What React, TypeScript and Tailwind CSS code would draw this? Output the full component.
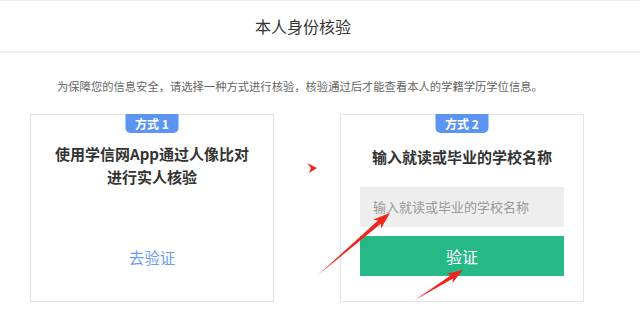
import React from "react";

function arrowPoints(tx: number, ty: number, hx: number, hy: number, headLen: number, headHalf: number, shaftHalf: number) {
  const dx = hx - tx;
  const dy = hy - ty;
  const len = Math.sqrt(dx * dx + dy * dy);
  const ux = dx / len;
  const uy = dy / len;
  const nx = -uy;
  const ny = ux;
  const bx = hx - ux * headLen;
  const by = hy - uy * headLen;
  const bbx = hx - ux * (headLen + 3);
  const bby = hy - uy * (headLen + 3);
  const pts = [
    [tx, ty],
    [bx + nx * shaftHalf, by + ny * shaftHalf],
    [bbx + nx * headHalf, bby + ny * headHalf],
    [hx, hy],
    [bbx - nx * headHalf, bby - ny * headHalf],
    [bx - nx * shaftHalf, by - ny * shaftHalf],
  ];
  return pts.map((p) => `${p[0].toFixed(1)},${p[1].toFixed(1)}`).join(" ");
}

export default function App() {
  const font = { fontFamily: '"Noto Sans CJK SC", "Noto Sans", sans-serif' };
  return (
    <div className="relative w-[640px] h-[331px] bg-white overflow-hidden" style={font}>
      <div className="border-t border-[#eeeeee] border-b-2 border-b-[#efefef] h-[53px] flex items-center justify-center pr-[34px]">
        <span className="text-[16px] text-[#333333] leading-none">本人身份核验</span>
      </div>
      <div className="mt-[23px] pl-[57px] text-[11.3px] leading-[20px] text-[#666666]">
        为保障您的信息安全，请选择一种方式进行核验，核验通过后才能查看本人的学籍学历学位信息。
      </div>
      <div className="mt-[18px] pl-[30px] flex gap-[66px]">
        <div className="relative w-[244px] h-[188px] border border-[#e4e4e4] flex flex-col items-center pt-[27px]">
          <div className="absolute -top-px left-1/2 -translate-x-1/2 w-[53px] h-[19px] rounded-b-[5px] bg-[#5b94f1] text-white text-[12px] font-bold flex items-center justify-center">
            方式 1
          </div>
          <div className="text-[15px] font-bold leading-[23px] text-[#333333] text-center">
            使用学信网App通过人像比对
            <br />
            进行实人核验
          </div>
          <div className="mt-[57px] text-[15.5px] leading-[24px] text-[#6c9df2]">去验证</div>
        </div>
        <div className="relative w-[244px] h-[188px] border border-[#e4e4e4] flex flex-col items-center pt-[30px]">
          <div className="absolute -top-px left-1/2 -translate-x-1/2 w-[53px] h-[19px] rounded-b-[5px] bg-[#5b94f1] text-white text-[12px] font-bold flex items-center justify-center">
            方式 2
          </div>
          <div className="text-[15px] font-bold leading-[23px] text-[#333333] text-center">输入就读或毕业的学校名称</div>
          <div className="mt-[19px] w-[204px] h-[40px] bg-[#eeeeee] flex items-center pl-[13px] text-[13px] text-[#999999]">
            输入就读或毕业的学校名称
          </div>
          <div className="mt-[9px] w-[204px] h-[40px] bg-[#26b887] flex items-center justify-center text-[16px] text-white">
            验证
          </div>
        </div>
      </div>
      <svg className="absolute left-0 top-0 pointer-events-none" width="640" height="331" viewBox="0 0 640 331">
        <polygon points="307,163 317,168 309,173 311,168" fill="#f0261e" />
        <polygon points={arrowPoints(318, 275, 390, 213, 14, 6, 2.2)} fill="#f0261e" />
        <polygon points={arrowPoints(415, 300, 463, 270, 13, 5.5, 2)} fill="#f0261e" />
      </svg>
    </div>
  );
}
